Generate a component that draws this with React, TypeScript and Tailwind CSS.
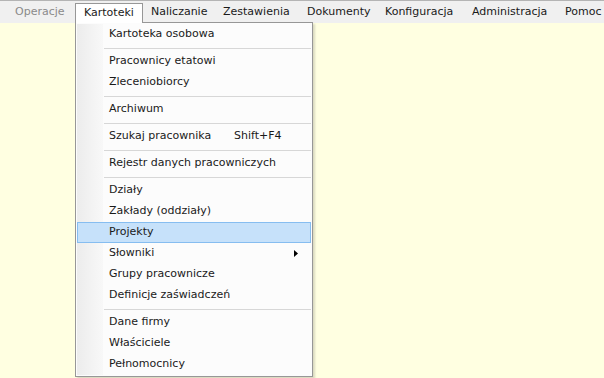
import React from 'react';

type Item = { label: string; shortcut?: string; sub?: boolean; active?: boolean } | 'sep';

const menuBar = [
  { label: 'Operacje', w: 'w-[68px]', disabled: true },
  { label: 'Kartoteki', w: 'w-[68px]', open: true },
  { label: 'Naliczanie', w: 'w-[72px]' },
  { label: 'Zestawienia', w: 'w-[84px]' },
  { label: 'Dokumenty', w: 'w-[78px]' },
  { label: 'Konfiguracja', w: 'w-[87px]' },
  { label: 'Administracja', w: 'w-[93px]' },
  { label: 'Pomoc', w: 'w-[60px]' },
];

const items: Item[] = [
  { label: 'Kartoteka osobowa' },
  'sep',
  { label: 'Pracownicy etatowi' },
  { label: 'Zleceniobiorcy' },
  'sep',
  { label: 'Archiwum' },
  'sep',
  { label: 'Szukaj pracownika', shortcut: 'Shift+F4' },
  'sep',
  { label: 'Rejestr danych pracowniczych' },
  'sep',
  { label: 'Działy' },
  { label: 'Zakłady (oddziały)' },
  { label: 'Projekty', active: true },
  { label: 'Słowniki', sub: true },
  { label: 'Grupy pracownicze' },
  { label: 'Definicje zaświadczeń' },
  'sep',
  { label: 'Dane firmy' },
  { label: 'Właściciele' },
  { label: 'Pełnomocnicy' },
];

export default function App() {
  return (
    <div
      className="w-[604px] h-[378px] overflow-hidden bg-[#ffffe1] text-[11px] text-[#1a1a1a] flex flex-col"
      style={{ fontFamily: '"DejaVu Sans", "Liberation Sans", sans-serif' }}
    >
      {/* menu bar */}
      <div className="h-[23px] shrink-0 bg-[#f0f0f0] border-t border-[#b4b4b4] flex items-stretch pl-[7px] relative">
        {menuBar.map(m => (
          <div
            key={m.label}
            className={`${m.w} shrink-0 pl-[8px] flex items-center whitespace-nowrap ${
              m.open ? 'bg-white border border-b-0 border-[#979797] pl-[6px] mt-[2px] relative z-20' : ''
            } ${m.disabled ? 'text-[#8a8a8a]' : ''}`}
          >
            {m.label}
          </div>
        ))}
      </div>

      {/* content + dropdown */}
      <div className="flex-1 relative">
        <div className="absolute left-[75px] top-[-1px] w-[238px] bg-[#fcfcfc] border border-[#979797] z-10 p-[1px] shadow-[2px_2px_2px_rgba(0,0,0,0.15)]">
          <div className="absolute left-[1px] top-[1px] bottom-[1px] w-[26px] bg-gradient-to-r from-[#ececec] to-[#f8f8f8]" />
          <div className="relative flex flex-col">
            {items.map((it, i) =>
              it === 'sep' ? (
                <div key={i} className="h-[6px] flex items-center pl-[27px]">
                  <div className="h-px w-full bg-[#d7d7d7]" />
                </div>
              ) : (
                <div
                  key={i}
                  className={`h-[21px] flex items-center pl-[31px] pr-[10px] whitespace-nowrap ${
                    it.active ? 'bg-[#c6e1fa] border border-[#86bdf0] pl-[30px]' : 'border border-transparent'
                  }`}
                >
                  <span className="flex-1">{it.label}</span>
                  {it.shortcut && <span className="w-[66px]">{it.shortcut}</span>}
                  {it.sub && (
                    <svg width="4" height="7" viewBox="0 0 4 7" className="mr-[2px]">
                      <path d="M0 0 L4 3.5 L0 7 Z" fill="#000" />
                    </svg>
                  )}
                </div>
              )
            )}
          </div>
        </div>
      </div>
    </div>
  );
}
